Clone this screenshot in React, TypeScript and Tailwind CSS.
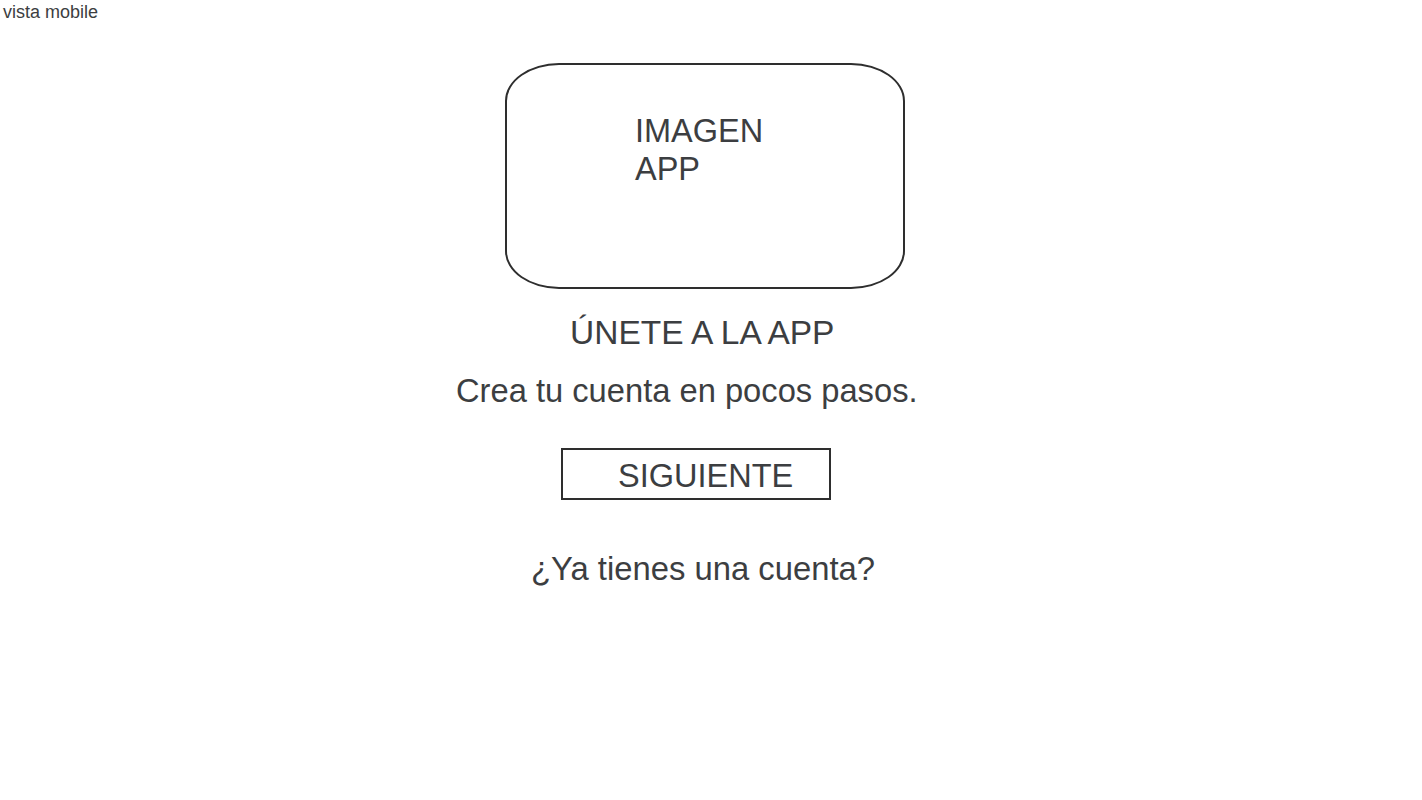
export default function App() {
  const font = { fontFamily: '"Liberation Sans", Arial, sans-serif' }

  return (
    <div className="min-h-[800px] w-full bg-white text-[#3c3e41]" style={font}>
      {/* Header label */}
      <div className="pl-[3px] pt-[3px] text-[18px] leading-[18px]">vista mobile</div>

      <div className="flex flex-col items-start">
        {/* Image placeholder */}
        <div className="ml-[505px] mt-[42px] h-[226px] w-[400px] rounded-[54px/38px] border-2 border-[#2e2e2e] pl-[128px] pt-[47px]">
          <p className="text-[32.5px] leading-[38px]">
            IMAGEN
            <br />
            APP
          </p>
        </div>

        {/* Title */}
        <h1 className="ml-[570px] mt-[28px] text-[33.5px] leading-[32px] font-normal">ÚNETE A LA APP</h1>

        {/* Subtitle */}
        <p className="ml-[456px] mt-[26px] text-[32.7px] leading-[32px]">Crea tu cuenta en pocos pasos.</p>

        {/* Next button */}
        <button className="ml-[561px] mt-[41px] h-[52px] w-[270px] border-2 border-[#2e2e2e] pl-[55px] pt-[4px] text-left text-[32.5px] leading-[32px]">
          SIGUIENTE
        </button>

        {/* Login link */}
        <p className="ml-[531px] mt-[53px] text-[32.8px] leading-[32px]">¿Ya tienes una cuenta?</p>
      </div>
    </div>
  )
}
